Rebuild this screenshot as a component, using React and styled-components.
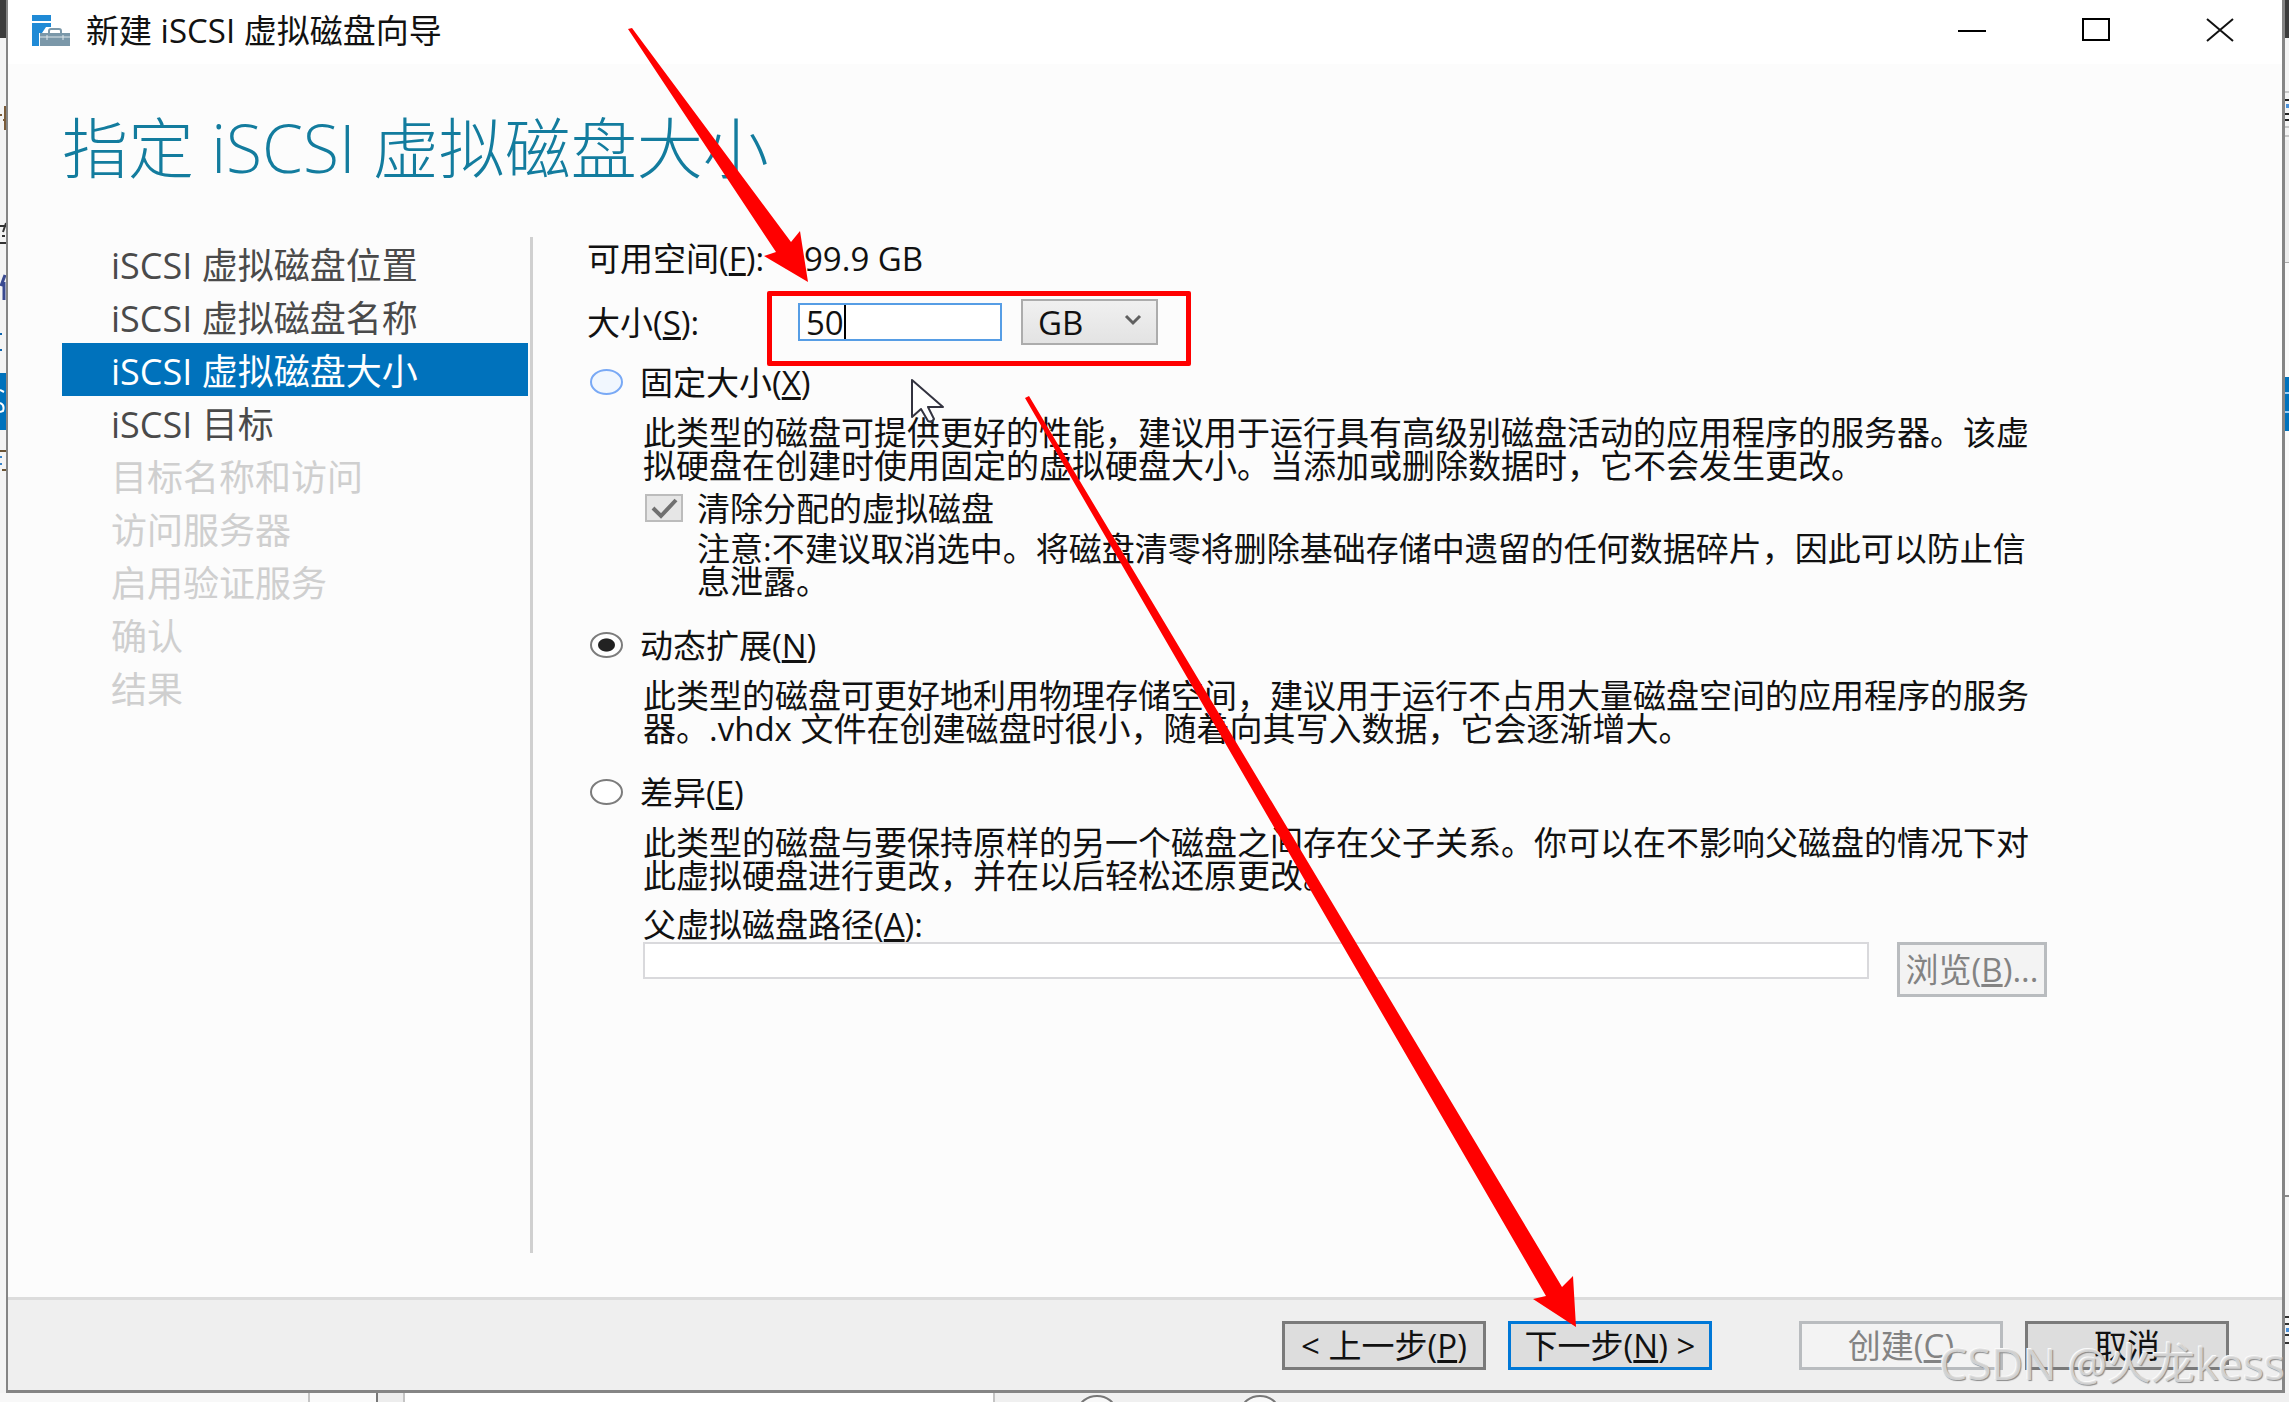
import React, { useState } from "react";
import styled, { createGlobalStyle } from "styled-components";

const GlobalStyle = createGlobalStyle`
  *, *::before, *::after { box-sizing: border-box; }
  html, body { margin: 0; padding: 0; }
  body {
    background: #f6f6f6;
    color: #111;
    font-family: "Open Sans", "Noto Sans CJK SC", sans-serif;
    font-size: 33px;
    line-height: 33px;
    overflow: hidden;
  }
  button, input, select { font: inherit; color: inherit; }
`;

const Desktop = styled.div`
  position: relative;
  display: grid;
  grid-template-columns: 6px minmax(0, 1fr) 4px;
  grid-template-rows: minmax(0, 1fr) 9px;
  height: 100vh;
  overflow: hidden;
`;

const Edge = styled.div`
  display: flex;
  flex-direction: column;
  background: #f4f4f4;
  overflow: hidden;
`;

const EdgeBlock = styled.div`
  flex: none;
  height: ${(p) => p.$h}px;
  background: ${(p) => p.$fill || "transparent"};
`;

const EdgeArt = styled.svg`
  display: block;
  flex: none;
`;

const BottomEdge = styled.div`
  grid-column: 1 / -1;
  display: flex;
  background: #f0f0f0;
  overflow: hidden;
`;

const BottomBlock = styled.div`
  flex: ${(p) => (p.$w ? "none" : "1")};
  width: ${(p) => (p.$w ? p.$w + "px" : "auto")};
  background: ${(p) => p.$fill};
  border-right: ${(p) => (p.$line ? "2px solid " + p.$line : "0")};
`;

const Window = styled.section`
  display: flex;
  flex-direction: column;
  min-width: 0;
  background: #fcfcfc;
  border: solid #858585;
  border-width: 0 3px 3px 2px;
`;

const TitleBar = styled.header`
  flex: none;
  display: flex;
  align-items: center;
  height: 64px;
  padding: 0 0 4px 24px;
  background: #fff;
`;

const TitleText = styled.span`
  flex: 1;
  margin-left: 15px;
  white-space: nowrap;
`;

const WindowButton = styled.button`
  display: flex;
  align-items: center;
  justify-content: center;
  width: 124px;
  height: 60px;
  padding: 0;
  border: 0;
  background: none;
`;

const WindowButtons = styled.div`
  display: flex;
`;

const Heading = styled.h1`
  flex: none;
  margin: 0;
  padding: 45px 0 52px 54px;
  color: #137c9e;
  font-size: 66px;
  font-weight: 300;
  line-height: 76px;
  white-space: nowrap;
`;

const Body = styled.div`
  flex: 1;
  display: flex;
  min-height: 0;
  padding-bottom: 44px;
`;

const Steps = styled.nav`
  flex: none;
  width: 525px;
  padding-left: 54px;
  padding-right: 2px;
  border-right: 3px solid #d0d0d0;
`;

const StepList = styled.ol`
  margin: 0;
  padding: 0;
  list-style: none;
`;

const Step = styled.li`
  height: 53px;
  padding-left: 49px;
  padding-top: 2px;
  font-size: 36px;
  line-height: 53px;
  white-space: nowrap;
  color: ${(p) => (p.$state === "current" ? "#fff" : p.$state === "off" ? "#cfcfcf" : "#4a4a4a")};
  background: ${(p) => (p.$state === "current" ? "#0072bc" : "transparent")};
`;

const Form = styled.form`
  flex: 1;
  min-width: 0;
  padding-left: 51px;
  padding-right: 235px;
`;

const Field = styled.div`
  display: grid;
  grid-template-columns: 211px 1fr;
  align-items: center;
  min-height: 42px;
  padding-left: 3px;
  white-space: nowrap;
`;

const SizeField = styled(Field)`
  min-height: 46px;
  margin-top: 20px;
`;

const Value = styled.output`
  padding-left: 6px;
`;

const SizeControls = styled.div`
  position: relative;
  display: flex;
  align-items: center;
  gap: 19px;
`;

const NumberBox = styled.div`
  display: flex;
  align-items: stretch;
  width: 204px;
  height: 38px;
  padding-left: 6px;
  border: 2px solid #569de5;
  background: #fff;
`;

const NumberInput = styled.input`
  width: 38px;
  padding: 0;
  border: 0;
  outline: 0;
  background: none;
  caret-color: transparent;
`;

const Caret = styled.i`
  width: 2px;
  background: #000;
`;

const UnitBox = styled.div`
  position: relative;
  width: 137px;
  height: 46px;

  svg {
    position: absolute;
    right: 16px;
    top: 15px;
    pointer-events: none;
  }
`;

const UnitSelect = styled.select`
  appearance: none;
  width: 100%;
  height: 100%;
  padding: 0 0 0 15px;
  border: 2px solid #acacac;
  border-radius: 0;
  background: linear-gradient(#f0f0f0, #e3e3e3);
`;

const Highlight = styled.div`
  position: absolute;
  left: -31px;
  top: -8px;
  width: 424px;
  height: 75px;
  border: 5px solid #f00;
  border-radius: 2px;
  pointer-events: none;
`;

const Options = styled.div`
  display: flex;
  flex-direction: column;
  gap: 29px;
  margin-top: 19px;
`;

const Option = styled.div`
  display: flex;
  flex-direction: column;
  gap: 16px;
`;

const RadioLabel = styled.label`
  display: flex;
  align-items: center;
  gap: 17px;
  height: 36px;
  padding-left: 6px;
  white-space: nowrap;
`;

const Radio = styled.input.attrs({ type: "radio" })`
  appearance: none;
  flex: none;
  width: 33px;
  height: 26px;
  margin: 0;
  border: 2px solid ${(p) => (p.$hot ? "#79a9f5" : "#7c7c7c")};
  border-radius: 50%;
  background: ${(p) => (p.$hot ? "#f1f7fe" : "#fff")};

  &:checked {
    background: radial-gradient(ellipse 9px 7px at center, #222 88%, #fff 100%);
  }
`;

const Detail = styled.div`
  padding-left: 59px;
`;

const Line = styled.span`
  display: block;
  white-space: nowrap;
`;

const Text = styled.p`
  margin: 0;
`;

const CheckLabel = styled.label`
  display: flex;
  align-items: center;
  gap: 14px;
  height: 36px;
  margin-top: 8px;
  white-space: nowrap;
`;

const CheckBox = styled.span`
  position: relative;
  display: flex;
  width: 38px;
  height: 28px;
  margin-left: 2px;

  svg {
    position: absolute;
    inset: 0;
    pointer-events: none;
  }
`;

const CheckInput = styled.input.attrs({ type: "checkbox" })`
  appearance: none;
  width: 100%;
  height: 100%;
  margin: 0;
  border: 2px solid #bcbcbc;
  background: #e6e6e6;
`;

const Note = styled(Text)`
  margin-top: 6px;
  padding-left: 54px;
`;

const PathLabel = styled.label`
  display: block;
  height: 34px;
  margin-top: 16px;
  white-space: nowrap;
`;

const PathRow = styled.div`
  display: flex;
  align-items: flex-start;
  gap: 28px;
`;

const PathInput = styled.input`
  flex: 1;
  min-width: 0;
  height: 37px;
  padding: 0 6px;
  border: 2px solid #d9d9dc;
  background: #fff;
`;

const Button = styled.button`
  flex: none;
  width: ${(p) => p.$width || 204}px;
  height: ${(p) => p.$height || 49}px;
  padding: 0;
  border: 3px solid ${(p) => (p.$primary ? "#0078d7" : p.disabled ? "#b9bcbf" : "#7a7a7a")};
  background: ${(p) => (p.disabled ? "#f3f3f3" : "#dddddd")};
  color: ${(p) => (p.disabled ? "#838383" : "#111")};
  white-space: nowrap;
`;

const Footer = styled.footer`
  flex: none;
  display: flex;
  align-items: center;
  justify-content: flex-end;
  gap: 87px;
  height: 93px;
  padding-right: 53px;
  border-top: 3px solid #dcdcdc;
  background: #efefef;
`;

const ButtonPair = styled.div`
  display: flex;
  gap: 22px;
`;

const Watermark = styled.div`
  position: absolute;
  right: 4px;
  bottom: 16px;
  font-size: 44px;
  line-height: 46px;
  color: rgba(222, 222, 222, 0.85);
  text-shadow: 1px 1px 1px #8a8a8a, -1px -1px 0 #fafafa;
  white-space: nowrap;
  pointer-events: none;
`;

const Annotations = styled.svg`
  position: absolute;
  left: 0;
  top: 0;
  pointer-events: none;
`;

const AppIcon = () => (
  <svg width="39" height="31" viewBox="0 0 39 31" aria-hidden="true">
    <path d="M0 0h19v6H0zM0 8h19v4h-5l-4 6H7v13H0z" fill="#1f8ad6" />
    <path d="M17 18v-2q0-2 2-2h8q2 0 2 2v2" fill="none" stroke="#7b98a9" strokeWidth="2" />
    <path d="M8 18h30v13H8z" fill="#7b98a9" />
    <path d="M8 22h30M15 20v5M31 20v5" stroke="#dfe7eb" strokeWidth="1" />
  </svg>
);

const STEPS = [
  ["iSCSI 虚拟磁盘位置", "done"],
  ["iSCSI 虚拟磁盘名称", "done"],
  ["iSCSI 虚拟磁盘大小", "current"],
  ["iSCSI 目标", "done"],
  ["目标名称和访问", "off"],
  ["访问服务器", "off"],
  ["启用验证服务", "off"],
  ["确认", "off"],
  ["结果", "off"],
];

function RadioOption({ value, kind, onPick, hot, name, hotkey, lines, children }) {
  return (
    <Option>
      <RadioLabel>
        <Radio name="kind" checked={value === kind} onChange={() => onPick(kind)} $hot={hot} />
        <span>
          {name}(<u>{hotkey}</u>)
        </span>
      </RadioLabel>
      <Detail>
        <Text>
          {lines.map((l) => (
            <Line key={l}>{l}</Line>
          ))}
        </Text>
        {children}
      </Detail>
    </Option>
  );
}

export default function App() {
  const [size, setSize] = useState("50");
  const [kind, setKind] = useState("dynamic");

  return (
    <Desktop>
      <GlobalStyle />
      <Edge>
        <EdgeBlock $h={38} $fill="#3c3c3c" />
        <EdgeBlock $h={66} />
        <EdgeArt width="6" height="269" aria-hidden="true">
          <path d="M0 11h2M3 16h3M5 2v24" stroke="#7a5c3a" strokeWidth="2" />
          <path d="M0 122h6M0 139h6M3 128l3-9M2 132h3" stroke="#333" strokeWidth="2" />
          <path d="M1 182l4-11M4 178v18" stroke="#3a4a90" strokeWidth="3" />
          <path d="M0 230h2M0 246h2" stroke="#0f66b0" strokeWidth="2" />
        </EdgeArt>
        <EdgeArt width="6" height="57" aria-hidden="true">
          <path d="M0 0h6v57H0z" fill="#0072bc" />
          <path d="M0 17l4 2M0 30q5 2 3 8l-3 1" stroke="#fff" strokeWidth="2" fill="none" />
        </EdgeArt>
        <EdgeArt width="6" height="50" aria-hidden="true">
          <path d="M0 21h6M2 40h4" stroke="#6a5334" strokeWidth="2" />
          <path d="M0 27h2M0 34h2" stroke="#3a84c8" strokeWidth="2" />
        </EdgeArt>
      </Edge>

      <Window>
        <TitleBar>
          <AppIcon />
          <TitleText>新建 iSCSI 虚拟磁盘向导</TitleText>
          <WindowButtons>
            <WindowButton aria-label="最小化">
              <svg width="28" height="24">
                <path d="M0 13h28" stroke="#000" strokeWidth="2" />
              </svg>
            </WindowButton>
            <WindowButton aria-label="最大化">
              <svg width="28" height="24">
                <path d="M1 1h26v21H1z" fill="none" stroke="#000" strokeWidth="2" />
              </svg>
            </WindowButton>
            <WindowButton aria-label="关闭">
              <svg width="28" height="24">
                <path d="M1 1l26 22M27 1L1 23" stroke="#111" strokeWidth="2" />
              </svg>
            </WindowButton>
          </WindowButtons>
        </TitleBar>

        <Heading>指定 iSCSI 虚拟磁盘大小</Heading>

        <Body>
          <Steps>
            <StepList>
              {STEPS.map(([label, state]) => (
                <Step key={label} $state={state}>
                  {label}
                </Step>
              ))}
            </StepList>
          </Steps>

          <Form id="wizard" onSubmit={(e) => e.preventDefault()}>
            <Field>
              <label htmlFor="free">
                可用空间(<u>F</u>):
              </label>
              <Value id="free">99.9 GB</Value>
            </Field>
            <SizeField>
              <label htmlFor="size">
                大小(<u>S</u>):
              </label>
              <SizeControls>
                <NumberBox>
                  <NumberInput id="size" value={size} onChange={(e) => setSize(e.target.value)} />
                  <Caret />
                </NumberBox>
                <UnitBox>
                  <UnitSelect aria-label="单位" defaultValue="GB">
                    <option>MB</option>
                    <option>GB</option>
                    <option>TB</option>
                  </UnitSelect>
                  <svg width="18" height="12" aria-hidden="true">
                    <path d="M2 2l7 7 7-7" fill="none" stroke="#606060" strokeWidth="3" />
                  </svg>
                </UnitBox>
                <Highlight />
              </SizeControls>
            </SizeField>

            <Options>
              <RadioOption
                value={kind}
                kind="fixed"
                onPick={setKind}
                hot
                name="固定大小"
                hotkey="X"
                lines={[
                  "此类型的磁盘可提供更好的性能，建议用于运行具有高级别磁盘活动的应用程序的服务器。该虚",
                  "拟硬盘在创建时使用固定的虚拟硬盘大小。当添加或删除数据时，它不会发生更改。",
                ]}
              >
                <CheckLabel>
                  <CheckBox>
                    <CheckInput defaultChecked disabled />
                    <svg width="38" height="28" aria-hidden="true">
                      <path d="M8 14l8 8L31 6" fill="none" stroke="#707070" strokeWidth="4" />
                    </svg>
                  </CheckBox>
                  清除分配的虚拟磁盘
                </CheckLabel>
                <Note>
                  <Line>注意:不建议取消选中。将磁盘清零将删除基础存储中遗留的任何数据碎片，因此可以防止信</Line>
                  <Line>息泄露。</Line>
                </Note>
              </RadioOption>
              <RadioOption
                value={kind}
                kind="dynamic"
                onPick={setKind}
                name="动态扩展"
                hotkey="N"
                lines={[
                  "此类型的磁盘可更好地利用物理存储空间，建议用于运行不占用大量磁盘空间的应用程序的服务",
                  "器。.vhdx 文件在创建磁盘时很小，随着向其写入数据，它会逐渐增大。",
                ]}
              />
              <RadioOption
                value={kind}
                kind="diff"
                onPick={setKind}
                name="差异"
                hotkey="E"
                lines={[
                  "此类型的磁盘与要保持原样的另一个磁盘之间存在父子关系。你可以在不影响父磁盘的情况下对",
                  "此虚拟硬盘进行更改，并在以后轻松还原更改。",
                ]}
              >
                <PathLabel htmlFor="parent">
                  父虚拟磁盘路径(<u>A</u>):
                </PathLabel>
                <PathRow>
                  <PathInput id="parent" disabled />
                  <Button type="button" disabled $width={150} $height={55}>
                    浏览(<u>B</u>)...
                  </Button>
                </PathRow>
              </RadioOption>
            </Options>
          </Form>
        </Body>

        <Footer>
          <ButtonPair>
            <Button>
              &lt; 上一步(<u>P</u>)
            </Button>
            <Button $primary>
              下一步(<u>N</u>) &gt;
            </Button>
          </ButtonPair>
          <ButtonPair>
            <Button disabled>
              创建(<u>C</u>)
            </Button>
            <Button>取消</Button>
          </ButtonPair>
        </Footer>
      </Window>

      <Edge>
        <EdgeBlock $h={38} $fill="#3c3c3c" />
        <EdgeBlock $h={52} />
        <EdgeArt width="4" height="50" aria-hidden="true">
          <path d="M0 2h4M0 37h4M0 46h4" stroke="#999" strokeWidth="1" />
          <path d="M0 10h4M0 24h4M0 30h4" stroke="#222" strokeWidth="2" />
          <path d="M1 14h3v4H1z" fill="#4a90d9" />
        </EdgeArt>
        <EdgeBlock $h={122} $fill="#ececec" />
        <EdgeBlock $h={1} $fill="#aaa" />
        <EdgeBlock $h={114} $fill="#fafafa" />
        <EdgeArt width="4" height="54" aria-hidden="true">
          <path d="M0 0h4v54H0z" fill="#0072bc" />
          <path d="M0 16h4M0 35h4" stroke="#9fd0f5" strokeWidth="2" />
        </EdgeArt>
        <EdgeBlock $h={764} $fill="#fafafa" />
        <EdgeBlock $h={2} $fill="#888" />
        <EdgeBlock $h={118} />
        <EdgeArt width="4" height="50" aria-hidden="true">
          <path d="M0 2h4M0 9h4M0 20h4M0 28h4" stroke="#333" strokeWidth="2" />
          <path d="M1 13h3v4H1z" fill="#4a90d9" />
        </EdgeArt>
      </Edge>

      <BottomEdge>
        <BottomBlock $w={310} $fill="#f8f8f8" $line="#c4c4c4" />
        <BottomBlock $w={68} $fill="#fafafa" $line="#777" />
        <BottomBlock $w={27} $fill="#ededed" $line="#c4c4c4" />
        <BottomBlock $w={590} $fill="#fff" $line="#c4c4c4" />
        <EdgeArt width="400" height="9" aria-hidden="true">
          <ellipse cx="102" cy="17" rx="18" ry="14" fill="#f8f8f8" stroke="#777" strokeWidth="2" />
          <ellipse cx="265" cy="17" rx="18" ry="14" fill="#f8f8f8" stroke="#777" strokeWidth="2" />
        </EdgeArt>
        <BottomBlock $fill="#f0f0f0" />
      </BottomEdge>

      <Watermark>CSDN @火龙kess</Watermark>

      <Annotations width="1600" height="1340" aria-hidden="true">
        <path d="M628 29L632 28 791 242 800 231 808 282 764 256 776 252z" fill="#f00" />
        <path d="M1025 398L1029 396 1562 1287 1573 1276 1576 1327 1533 1299 1546 1296z" fill="#f00" />
        <path
          d="M912 380v37l9-8 7 12q4 2 6-2l-6-12h15z"
          fill="#fff"
          stroke="#333340"
          strokeWidth="2"
          strokeLinejoin="round"
        />
      </Annotations>
    </Desktop>
  );
}
